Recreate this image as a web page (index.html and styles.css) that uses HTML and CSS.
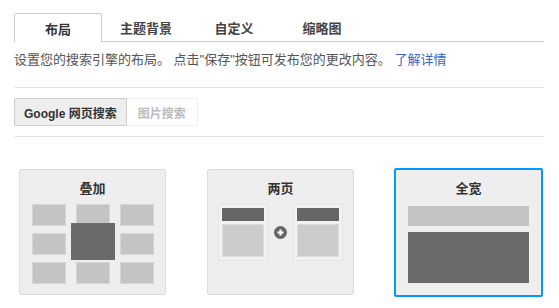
FILE: index.html
```html
<!DOCTYPE html>
<html lang="zh-CN">

<head>
    <meta charset="UTF-8">
    <meta name="viewport" content="width=device-width, initial-scale=1.0">
    <title>布局</title>
    <link rel="stylesheet" href="styles.css">
</head>

<body>
    <div class="Page">
        <div class="tabs">
            <div class="tab active">布局</div>
            <div class="tab">主题背景</div>
            <div class="tab">自定义</div>
            <div class="tab">缩略图</div>
        </div>
        <p class="desc">设置您的搜索引擎的布局。 点击"保存"按钮可发布您的更改内容。 <a href="#">了解详情</a></p>
        <div class="segBar">
            <div class="seg">
                <div class="segBtn on">Google 网页搜索</div>
                <div class="segBtn">图片搜索</div>
            </div>
        </div>
        <div class="cards">
            <div class="card">
                <div class="cardTitle">叠加</div>
                <div class="overlay">
                    <div class="grid">
                        <span></span><span></span><span></span>
                        <span></span><span></span><span></span>
                        <span></span><span></span><span></span>
                    </div>
                    <div class="overBox"></div>
                </div>
            </div>
            <div class="card">
                <div class="cardTitle">两页</div>
                <div class="twoPage">
                    <div class="pg"><div class="pgHead"></div><div class="pgBody"></div></div>
                    <div class="plus">
                        <svg width="13" height="13" viewBox="0 0 13 13">
                            <circle cx="6.5" cy="6.5" r="6.5" fill="#666"/>
                            <path d="M6.5 3.5v6M3.5 6.5h6" stroke="#fff" stroke-width="2.2"/>
                        </svg>
                    </div>
                    <div class="pg"><div class="pgHead"></div><div class="pgBody"></div></div>
                </div>
            </div>
            <div class="card sel">
                <div class="cardTitle">全宽</div>
                <div class="full">
                    <div class="fullBar"></div>
                    <div class="fullBody"></div>
                </div>
            </div>
        </div>
    </div>
</body>

</html>
```

FILE: styles.css
```css
* {
    margin: 0px;
    padding: 0px;
    box-sizing: border-box;
}

body {
    background-color: white;
    font-family: "Liberation Sans", "Noto Sans CJK SC", sans-serif;
    color: #444;
}

.Page {
    width: 559px;
    padding: 13px 15px 0px 14px;
}

.tabs {
    display: flex;
    height: 29px;
    border-bottom: 1px solid #ccc;
}

.tab {
    width: 88px;
    height: 28px;
    display: flex;
    align-items: center;
    justify-content: center;
    font-size: 13px;
    font-weight: bold;
    color: #444;
    border: 1px solid transparent;
}

.tab.active {
    border-color: #ccc;
    border-bottom: none;
    background-color: white;
    border-radius: 2px 2px 0px 0px;
    height: 29px;
    margin-bottom: -1px;
    color: #333;
}

.desc {
    font-size: 13px;
    line-height: 20px;
    margin-top: 8px;
    margin-bottom: 17px;
    color: #555;
}

.desc a {
    color: #36c;
    text-decoration: none;
}

.segBar {
    border-top: 1px solid #e5e5e5;
    border-bottom: 1px solid #e5e5e5;
    padding: 10px 0px;
}

.seg {
    display: flex;
}

.segBtn {
    height: 28px;
    padding: 0px 11px;
    display: flex;
    align-items: center;
    font-size: 12px;
    font-weight: bold;
    color: #bbb;
    border: 1px solid #eee;
    border-left: none;
    border-radius: 0px 2px 2px 0px;
}

.segBtn.on {
    background-color: #eee;
    color: #333;
    border: 1px solid #ccc;
    border-radius: 2px 0px 0px 2px;
    padding: 0px 9px;
}

.cards {
    display: flex;
    gap: 41px;
    margin-top: 32px;
    padding-left: 5px;
}

.card {
    width: 147px;
    height: 126px;
    background-color: #eee;
    border: 1px solid #ddd;
    border-radius: 2px;
}

.card.sel {
    width: 149px;
    height: 129px;
    margin-top: -1px;
    margin-left: -1px;
    border: 2px solid #09f;
}

.cardTitle {
    height: 34px;
    padding-top: 8px;
    text-align: center;
    font-size: 13px;
    font-weight: bold;
    color: #333;
}

.overlay {
    position: relative;
    padding-left: 12px;
}

.grid {
    display: grid;
    grid-template-columns: repeat(3, 34px);
    grid-auto-rows: 22px;
    column-gap: 10px;
    row-gap: 7px;
}

.grid > span {
    background-color: #c4c4c4;
    border: 1px solid #d6d6d6;
}

.overBox {
    position: absolute;
    left: 51px;
    top: 19px;
    width: 44px;
    height: 37px;
    background-color: #6b6b6b;
}

.twoPage {
    display: flex;
    align-items: center;
    gap: 6px;
    padding-left: 10px;
}

.pg {
    width: 50px;
    height: 57px;
    background-color: #f2f2f2;
    border: 1px solid #e4e4e4;
    padding: 3px;
    display: flex;
    flex-direction: column;
    gap: 3px;
}

.pgHead {
    height: 13px;
    background-color: #666;
}

.pgBody {
    flex: 1;
    background-color: #ccc;
    border: 1px solid #dcdcdc;
}

.plus {
    width: 13px;
    height: 13px;
    display: flex;
}

.full {
    padding: 2px 12px 0px 12px;
    display: flex;
    flex-direction: column;
    gap: 6px;
}

.fullBar {
    height: 20px;
    background-color: #c4c4c4;
}

.fullBody {
    height: 51px;
    background-color: #6b6b6b;
}
```
